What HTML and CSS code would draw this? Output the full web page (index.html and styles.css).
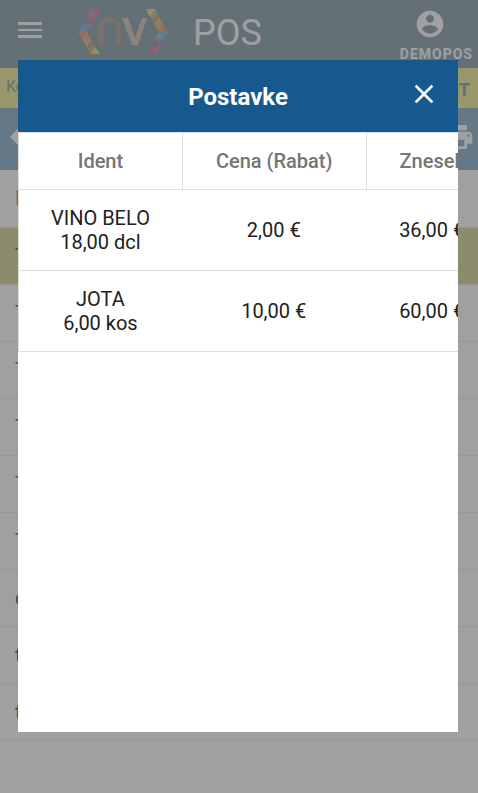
FILE: index.html
```html
<!DOCTYPE html>
<html lang="sl">
<head>
    <meta charset="UTF-8">
    <meta name="viewport" content="width=device-width, initial-scale=1.0">
    <title>POS</title>
    <link rel="stylesheet" href="styles.css">
</head>
<body>

    <div class="app">
        <!-- Header -->
        <header class="app-header">
            <button class="icon-button menu-button" aria-label="Meni">
                <svg width="24" height="16" viewBox="0 0 24 16"><path d="M0 0h24v3H0zM0 7h24v2H0zM0 13h24v3H0z" fill="currentColor"/></svg>
            </button>
            <svg class="logo" width="90" height="46" viewBox="0 0 90 46">
                <!-- left bracket -->
                <path d="M13 0h9l-4 8h-9z" fill="#d8608f"/>
                <path d="M13 0l4 8h-8z" fill="#b98098"/>
                <path d="M9 8h9l-4 7h-9z" fill="#8a78ae"/>
                <path d="M18 8l-4 7-5-7z" fill="#c0608f"/>
                <path d="M5 15h9l-5 8h-9z" fill="#5fa8cc"/>
                <path d="M5 15h9l-4 7z" fill="#7a8fbe"/>
                <path d="M0 23h9l4 7h-9z" fill="#e2805a"/>
                <path d="M9 23l4 7h-9z" fill="#d09f70"/>
                <path d="M4 30h9l4 8h-8z" fill="#e8a850"/>
                <path d="M13 30l4 8h-8z" fill="#a09080"/>
                <path d="M9 38h8l5 7h-9z" fill="#e0da50"/>
                <path d="M9 38h8l-4 7z" fill="#a3a070"/>
                <!-- right bracket -->
                <path d="M68 0h9l4 8h-9z" fill="#e0da50"/>
                <path d="M77 0l4 8h-9z" fill="#b3b060"/>
                <path d="M72 8h9l4 7h-9z" fill="#a09080"/>
                <path d="M81 8l4 7h-9z" fill="#e8a850"/>
                <path d="M76 15h9l5 8h-9z" fill="#e09f50"/>
                <path d="M85 15l5 8h-9z" fill="#e2805a"/>
                <path d="M81 23h9l-4 7h-9z" fill="#5fa8cc"/>
                <path d="M81 23l5 7h-9z" fill="#70b8d0"/>
                <path d="M77 30h9l-4 8h-9z" fill="#8a78ae"/>
                <path d="M77 30l5 8h-9z" fill="#a06090"/>
                <path d="M73 38h9l-4 7h-9z" fill="#d8608f"/>
                <path d="M73 38l5 7h-9z" fill="#c0608f"/>
                <!-- mark between the brackets -->
                <path d="M23 36V16q0-5 6-5h5q6 0 6 7v18" fill="none" stroke="#a0877d" stroke-width="5"/>
                <path d="M44 9h6l7 20 7-20h5L60 36h-6z" fill="#cdb4aa"/>
            </svg>
            <h1 class="app-title">POS</h1>
            <button class="user-button">
                <svg width="32" height="32" viewBox="0 0 24 24"><path d="M12 2C6.480 2 2 6.480 2 12s4.480 10 10 10 10-4.480 10-10S17.520 2 12 2zm0 3c1.660 0 3 1.340 3 3s-1.340 3-3 3-3-1.340-3-3 1.340-3 3-3zm0 14.200c-2.500 0-4.710-1.280-6-3.220.030-1.990 4-3.080 6-3.080 1.990 0 5.970 1.090 6 3.080-1.290 1.940-3.500 3.220-6 3.220z" fill="currentColor"/></svg>
                <span>DEMOPOS</span>
            </button>
        </header>

        <div class="status-bar">
            <span>Konto</span>
            <strong>TEST</strong>
        </div>

        <div class="toolbar">
            <button class="icon-button" aria-label="Nazaj">
                <svg width="32" height="32" viewBox="0 0 24 24"><path d="M20 12H6M12 5l-7 7 7 7" fill="none" stroke="currentColor" stroke-width="3"/></svg>
            </button>
            <button class="icon-button" aria-label="Natisni">
                <svg width="32" height="32" viewBox="0 0 24 24"><path d="M19 8H5c-1.660 0-3 1.340-3 3v6h4v4h12v-4h4v-6c0-1.660-1.340-3-3-3zm-3 11H8v-5h8v5zm3-7c-.550 0-1-.450-1-1s.450-1 1-1 1 .450 1 1-.450 1-1 1zm-1-9H6v4h12V3z" fill="currentColor"/></svg>
            </button>
        </div>

        <table class="list">
            <thead>
                <tr><th>Ime</th></tr>
            </thead>
            <tbody>
                <tr class="selected"><td>T1</td></tr>
                <tr><td>T2</td></tr>
                <tr><td>T3</td></tr>
                <tr><td>T4</td></tr>
                <tr><td>T5</td></tr>
                <tr><td>T6</td></tr>
                <tr><td>c1</td></tr>
                <tr><td>t1</td></tr>
                <tr><td>t2</td></tr>
            </tbody>
        </table>
    </div>

    <!-- Dialog -->
    <div class="overlay">
        <div class="dialog" role="dialog" aria-labelledby="dialogTitle">
            <div class="dialog-header">
                <h2 id="dialogTitle">Postavke</h2>
                <button class="icon-button close-button" aria-label="Zapri">
                    <svg width="32" height="32" viewBox="0 0 24 24"><path d="M19 6.410L17.590 5 12 10.590 6.410 5 5 6.410 10.590 12 5 17.590 6.410 19 12 13.410 17.590 19 19 17.590 13.410 12z" fill="currentColor"/></svg>
                </button>
            </div>
            <div class="dialog-body">
                <table class="items">
                    <thead>
                        <tr>
                            <th>Ident</th>
                            <th>Cena (Rabat)</th>
                            <th>Znesek</th>
                        </tr>
                    </thead>
                    <tbody>
                        <tr>
                            <td>VINO BELO<br>18,00 dcl</td>
                            <td>2,00 €</td>
                            <td>36,00 €</td>
                        </tr>
                        <tr>
                            <td>JOTA<br>6,00 kos</td>
                            <td>10,00 €</td>
                            <td>60,00 €</td>
                        </tr>
                    </tbody>
                </table>
            </div>
        </div>
    </div>

</body>
</html>
```

FILE: styles.css
```css
* {
    box-sizing: border-box;
}

body {
    font-family: Roboto, "Liberation Sans", sans-serif;
    margin: 0;
    background-color: #fff;
    color: #212121;
}

button {
    font-family: inherit;
    background: none;
    border: none;
    padding: 0;
    color: inherit;
    cursor: pointer;
}

.icon-button svg {
    display: block;
}

.app {
    min-height: 100vh;
    overflow: hidden;
}

/* Header */
.app-header {
    display: flex;
    align-items: center;
    height: 68px;
    padding: 0 5px 0 18px;
    background-color: #668998;
    color: #fff;
}

.menu-button {
    margin: 0 36px 8px 0;
}

.logo {
    margin-bottom: 4px;
}

.app-title {
    margin: 0 auto 2px 25px;
    font-size: 36px;
    font-weight: 400;
}

.user-button {
    display: flex;
    flex-direction: column;
    align-items: center;
    gap: 6px;
    padding-top: 2px;
    font-size: 14px;
    line-height: 16px;
    font-weight: 700;
    letter-spacing: 1px;
}

.user-button svg {
    margin-right: 12px;
}

/* Status and toolbar */
.status-bar {
    display: flex;
    justify-content: space-between;
    align-items: center;
    height: 40px;
    padding: 0 8px 4px 6px;
    background-color: #ebeb78;
    color: #668998;
    font-size: 16px;
}

.status-bar strong {
    padding-top: 6px;
    font-size: 18px;
}

.toolbar {
    display: flex;
    justify-content: space-between;
    align-items: center;
    height: 62px;
    padding: 0 3px 4px 6px;
    background-color: #6b9bbc;
    color: #fff;
}

/* List */
.list {
    width: 100%;
    border-collapse: collapse;
    font-size: 20px;
    line-height: 24px;
}

.list th,
.list td {
    height: 57px;
    padding: 0 15px;
    text-align: left;
    border-bottom: 1px solid #e8e8e8;
}

.list th {
    font-weight: 500;
    color: #757575;
}

.list .selected {
    background-color: #cdcd80;
}

/* Dialog */
.overlay {
    position: fixed;
    inset: 0;
    display: flex;
    padding: 60px 20px 61px 18px;
    background-color: rgba(97, 97, 97, 0.6);
}

.dialog {
    flex: 1;
    min-width: 0;
    display: flex;
    flex-direction: column;
    background-color: #fff;
}

.dialog-header {
    display: grid;
    grid-template-columns: 50px 1fr 50px;
    align-items: center;
    height: 72px;
    flex-shrink: 0;
    background-color: #15598f;
    color: #fff;
}

.dialog-header h2 {
    grid-column: 2;
    margin: 2px 0 0;
    font-size: 24px;
    font-weight: 700;
    text-align: center;
}

.close-button {
    padding-bottom: 4px;
}

.dialog-body {
    flex: 1;
    overflow: hidden;
}

.items {
    border-collapse: separate;
    border-spacing: 0;
    border: 1px solid #ddd;
    border-bottom: none;
    font-size: 20px;
    line-height: 24px;
    text-align: center;
    white-space: nowrap;
}

.items th,
.items td {
    padding: 16px 32px;
    border-bottom: 1px solid #ddd;
}

.items th {
    font-weight: 500;
    color: #757575;
}

.items th + th,
.items td + td {
    padding: 16px 33px;
}

.items th + th {
    border-left: 1px solid #ddd;
}

.items td {
    height: 81px;
}
```
